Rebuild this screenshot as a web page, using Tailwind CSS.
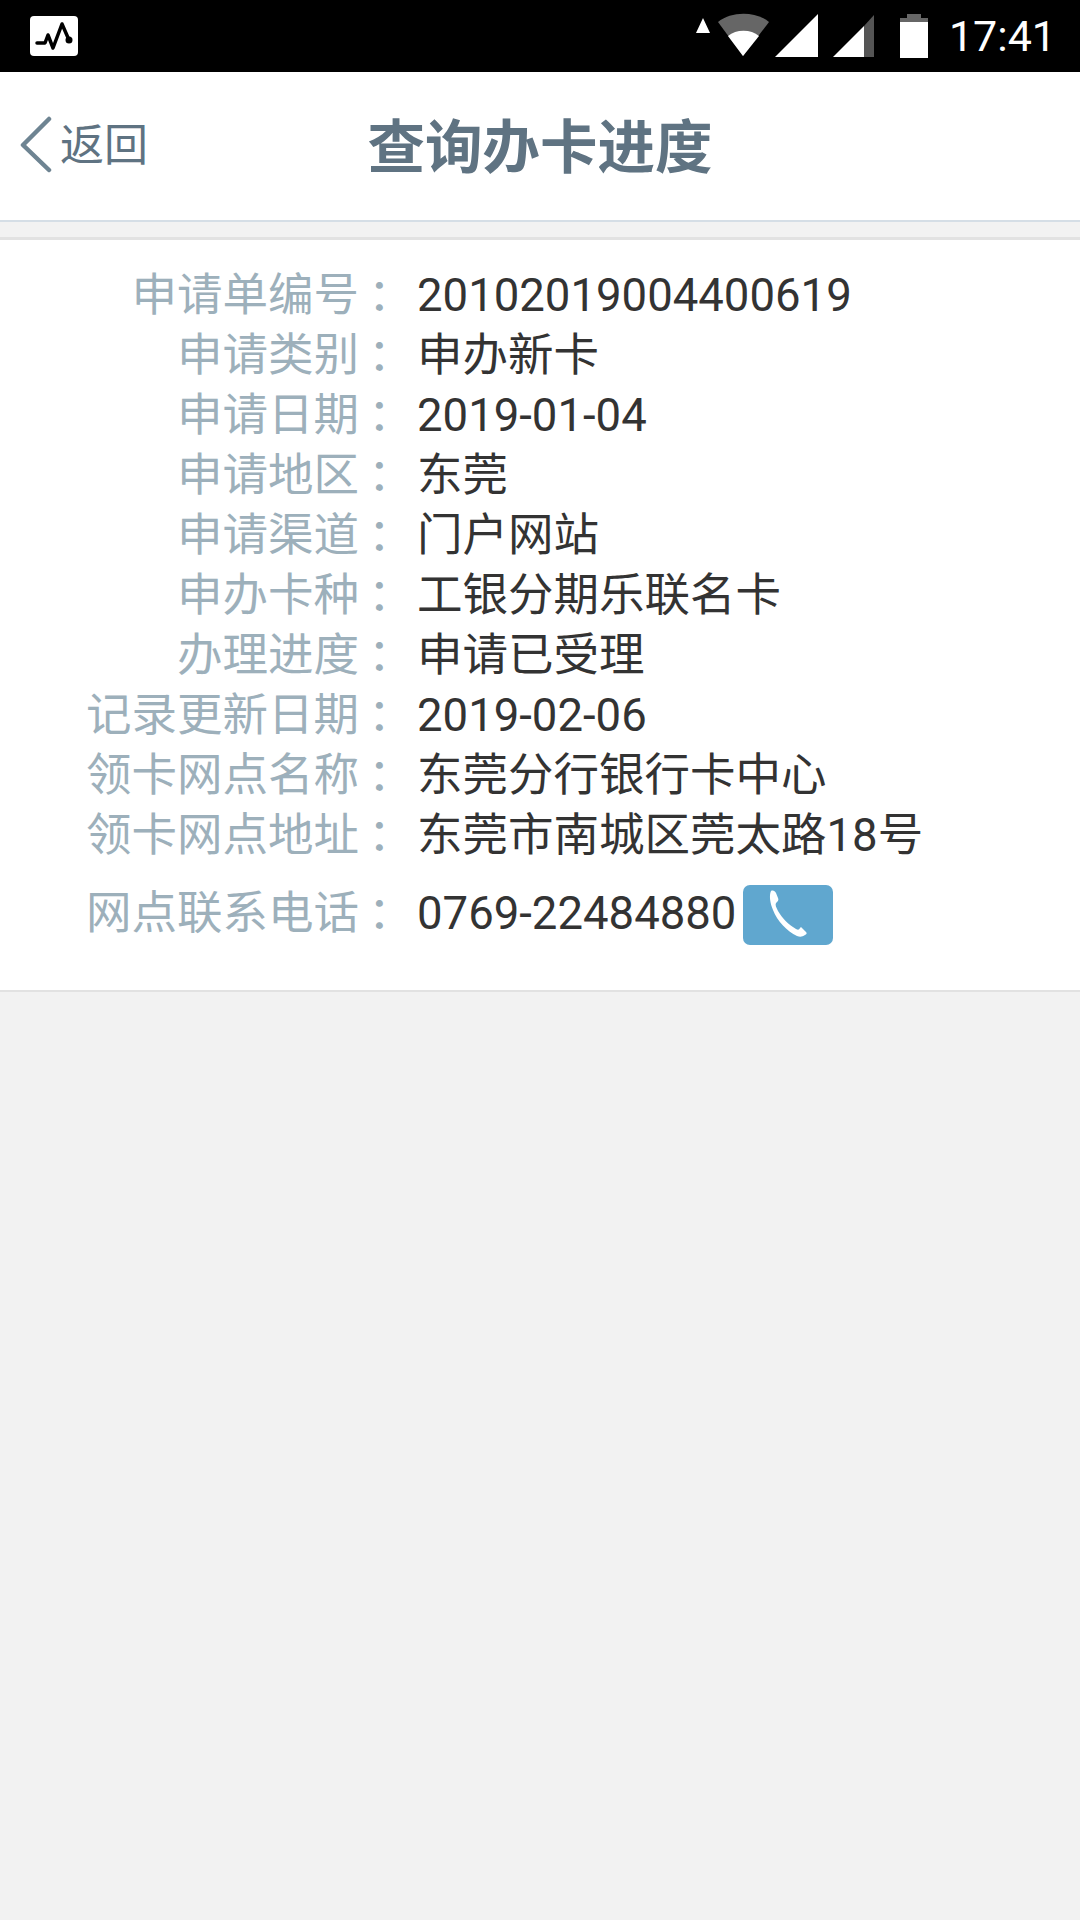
<!DOCTYPE html>
<html lang="zh-CN">
<head>
  <meta charset="UTF-8" />
  <title>查询办卡进度</title>
  <meta name="viewport" content="width=device-width, initial-scale=1" />
  <script src="https://cdn.jsdelivr.net/npm/@tailwindcss/browser@4"></script>
</head>
<body class="bg-[#f2f2f2] font-['Roboto','Noto_Sans_CJK_SC',sans-serif] w-[1080px] h-[1920px] overflow-hidden">
  <!-- status bar -->
  <div class="h-[72px] bg-black flex items-center justify-between pl-[30px] pr-[24px]">
    <div class="w-[48px] h-[40px] bg-white rounded-[4px] flex items-center justify-center">
      <svg width="44" height="30" viewBox="0 0 44 30" fill="none" stroke="black" stroke-width="3.5" stroke-linejoin="round" stroke-linecap="round">
        <path d="M5 22H13L16 14L21 27L30 3L37 19" />
        <circle cx="37" cy="19" r="3.5" fill="black" stroke="none" />
      </svg>
    </div>
    <div class="flex items-center">
      <svg width="290" height="72" viewBox="0 0 290 72">
        <path d="M35 33L42 18L49 33Z" fill="#fff" />
        <path d="M57 22C70 11 95 11 108 22L82 56Z" fill="#666" />
        <path d="M67 36C75 29 90 29 98 36L82 56Z" fill="#fff" />
        <path d="M114 57L157 14V57Z" fill="#fff" />
        <path d="M172 57L203 26V57Z" fill="#fff" />
        <path d="M203 26L213 15V57H203Z" fill="#555" />
        <rect x="246" y="14" width="14" height="5" fill="#666" />
        <rect x="239" y="18" width="28" height="4" fill="#666" />
        <rect x="239" y="22" width="28" height="36" fill="#fff" />
      </svg>
      <span class="text-white text-[43px] leading-none ml-[-2px]">17:41</span>
    </div>
  </div>

  <!-- header -->
  <header class="relative h-[150px] bg-white border-b-2 border-[#d5dee6] flex items-center justify-center">
    <div class="absolute left-[20px] top-0 h-full flex items-center">
      <svg width="34" height="60" viewBox="0 0 34 60" fill="none" stroke="#6e8492" stroke-width="4.5" stroke-linecap="round" stroke-linejoin="round">
        <path d="M29 3L3 29L29 54" />
      </svg>
      <span class="text-[#5f7382] text-[44px] ml-[6px]">返回</span>
    </div>
    <h1 class="text-[#5f7382] text-[57.5px] font-bold pt-[6px]">查询办卡进度</h1>
  </header>

  <!-- details -->
  <div class="mt-[15px] bg-white border-t-[3px] border-b-2 border-[#e2e2e2] h-[755px] pt-[26px] text-[45.5px]">
    <div class="flex h-[60px] items-center"><span class="w-[359px] shrink-0 text-right text-[#9db0bb] whitespace-nowrap">申请单编号</span><span class="w-[58px] shrink-0 pl-[9px] text-[#9db0bb]">：</span><span class="text-[#333]">20102019004400619</span></div>
    <div class="flex h-[60px] items-center"><span class="w-[359px] shrink-0 text-right text-[#9db0bb] whitespace-nowrap">申请类别</span><span class="w-[58px] shrink-0 pl-[9px] text-[#9db0bb]">：</span><span class="text-[#333]">申办新卡</span></div>
    <div class="flex h-[60px] items-center"><span class="w-[359px] shrink-0 text-right text-[#9db0bb] whitespace-nowrap">申请日期</span><span class="w-[58px] shrink-0 pl-[9px] text-[#9db0bb]">：</span><span class="text-[#333]">2019-01-04</span></div>
    <div class="flex h-[60px] items-center"><span class="w-[359px] shrink-0 text-right text-[#9db0bb] whitespace-nowrap">申请地区</span><span class="w-[58px] shrink-0 pl-[9px] text-[#9db0bb]">：</span><span class="text-[#333]">东莞</span></div>
    <div class="flex h-[60px] items-center"><span class="w-[359px] shrink-0 text-right text-[#9db0bb] whitespace-nowrap">申请渠道</span><span class="w-[58px] shrink-0 pl-[9px] text-[#9db0bb]">：</span><span class="text-[#333]">门户网站</span></div>
    <div class="flex h-[60px] items-center"><span class="w-[359px] shrink-0 text-right text-[#9db0bb] whitespace-nowrap">申办卡种</span><span class="w-[58px] shrink-0 pl-[9px] text-[#9db0bb]">：</span><span class="text-[#333]">工银分期乐联名卡</span></div>
    <div class="flex h-[60px] items-center"><span class="w-[359px] shrink-0 text-right text-[#9db0bb] whitespace-nowrap">办理进度</span><span class="w-[58px] shrink-0 pl-[9px] text-[#9db0bb]">：</span><span class="text-[#333]">申请已受理</span></div>
    <div class="flex h-[60px] items-center"><span class="w-[359px] shrink-0 text-right text-[#9db0bb] whitespace-nowrap">记录更新日期</span><span class="w-[58px] shrink-0 pl-[9px] text-[#9db0bb]">：</span><span class="text-[#333]">2019-02-06</span></div>
    <div class="flex h-[60px] items-center"><span class="w-[359px] shrink-0 text-right text-[#9db0bb] whitespace-nowrap">领卡网点名称</span><span class="w-[58px] shrink-0 pl-[9px] text-[#9db0bb]">：</span><span class="text-[#333]">东莞分行银行卡中心</span></div>
    <div class="flex h-[60px] items-center"><span class="w-[359px] shrink-0 text-right text-[#9db0bb] whitespace-nowrap">领卡网点地址</span><span class="w-[58px] shrink-0 pl-[9px] text-[#9db0bb]">：</span><span class="text-[#333]">东莞市南城区莞太路18号</span></div>
    <div class="flex h-[60px] items-center mt-[18px]">
      <span class="w-[359px] shrink-0 text-right text-[#9db0bb] whitespace-nowrap">网点联系电话</span><span class="w-[58px] shrink-0 pl-[9px] text-[#9db0bb]">：</span><span class="text-[#333]">0769-22484880</span>
      <div class="ml-[7px] mt-[2px] w-[90px] h-[60px] rounded-[7px] bg-[#60a7cf] flex items-center justify-center">
        <svg width="40" height="50" viewBox="0 0 40 50">
          <path d="M3 1C5 0 7 1 8 3L10 8C11 10 10 11 8 13C7 15 8 17 10 21C14 28 21 35 28 39C30 40 31 40 32 38L33 37L38 42C39 43 39 44 37 45C34 47 32 47 29 46C19 41 9 31 5 20C2 13 1 5 3 1Z" fill="#fff" />
        </svg>
      </div>
    </div>
  </div>
</body>
</html>
